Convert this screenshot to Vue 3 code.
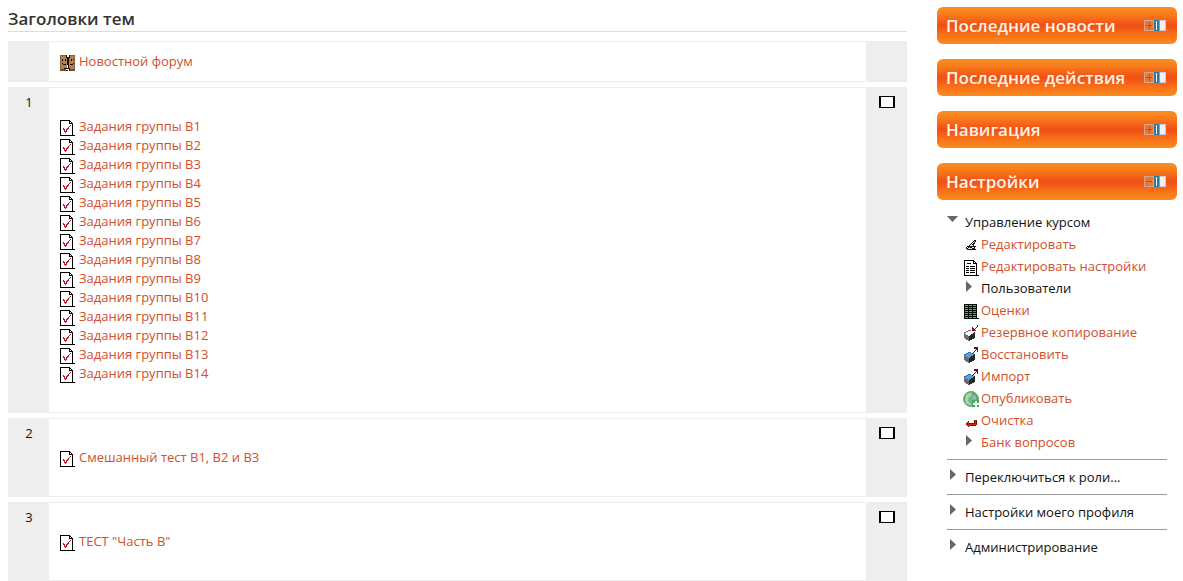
<script setup>
import { ref } from 'vue'

const tasks = Array.from({ length: 14 }, (_, i) => `Задания группы B${i + 1}`)

const sections = [
  { number: '', items: ['Новостной форум'], icon: 'forum' },
  { number: '1', items: tasks, icon: 'quiz' },
  { number: '2', items: ['Смешанный тест B1, B2 и B3'], icon: 'quiz' },
  { number: '3', items: ['ТЕСТ "Часть B"'], icon: 'quiz' }
]

const blocks = ref([
  { title: 'Последние новости', open: false },
  { title: 'Последние действия', open: false },
  { title: 'Навигация', open: false },
  { title: 'Настройки', open: true }
])

const courseItems = [
  { text: 'Редактировать', icon: 'edit' },
  { text: 'Редактировать настройки', icon: 'settings' },
  { text: 'Пользователи', icon: 'branch', plain: true },
  { text: 'Оценки', icon: 'grades' },
  { text: 'Резервное копирование', icon: 'backup' },
  { text: 'Восстановить', icon: 'restore' },
  { text: 'Импорт', icon: 'restore' },
  { text: 'Опубликовать', icon: 'publish' },
  { text: 'Очистка', icon: 'reset' },
  { text: 'Банк вопросов', icon: 'branch' }
]

const branches = ['Переключиться к роли...', 'Настройки моего профиля', 'Администрирование']
</script>

<template>
  <div class="page">
    <main class="content">
      <h2 class="title">Заголовки тем</h2>
      <ul class="sections">
        <li v-for="(section, i) in sections" :key="i" class="section" :class="{ topic: section.number }">
          <div class="side">{{ section.number }}</div>
          <ul class="activities">
            <li v-for="item in section.items" :key="item">
              <a href="#" class="activity">
                <svg v-if="section.icon === 'quiz'" class="icon" width="16" height="16" viewBox="0 0 16 16" shape-rendering="crispEdges" aria-hidden="true">
                  <path d="M0 0h10v1h1v1h1v1h1v12h2v1H0z" fill="#000" />
                  <path d="M1 1h8v3h3v11H1z" fill="#fff" />
                  <path d="M10 2h1v1h-1z" fill="#fff" />
                  <path d="M3 8h1v1h1v2h1V9h1V8h1V7h1V6h1V5h1v1h-1v1H9v2H8v1H7v2H6v1H5v-1H4v-2H3z" fill="#b3182c" />
                </svg>
                <svg v-else class="icon" width="16" height="16" viewBox="0 0 16 16" shape-rendering="crispEdges" aria-hidden="true">
                  <path d="M0 0h7v14H0z M9 0h6v14H9z" fill="#b08052" />
                  <path d="M0 0h7v1H0z M9 0h6v1H9z M0 1h1v13H0z M14 1h1v13h-1z" fill="#8d6340" />
                  <path d="M6 0h1v3H6z M9 0h1v3H9z M7 2h1v8H7z M8 2h1v12H8z M4 13h4v1H4z M2 4h1v2H2z M5 4h1v2H5z M11 4h1v2h-1z M13 4h1v1h-1z M2 8h1v1H2z M3 9h3v1H3z M10 9h3v1h-3z M13 8h1v1h-1z M6 15h2v1H6z M9 13h1v3H9z" fill="#17100c" />
                  <path d="M0 14h6v2H0z M10 14h5v2h-5z" fill="#6f5138" />
                  <path d="M7 0h2v2H7z M7 11h1v2H7z" fill="#fff" />
                </svg>
                <span>{{ item }}</span>
              </a>
            </li>
          </ul>
          <div class="side">
            <button v-if="section.number" type="button" class="only" :aria-label="`Показать только тему ${section.number}`"></button>
          </div>
        </li>
      </ul>
    </main>

    <aside class="sidebar">
      <section v-for="block in blocks" :key="block.title" class="block">
        <header class="block-head">
          <h2>{{ block.title }}</h2>
          <button type="button" class="toggle" :aria-label="block.title" :aria-expanded="block.open" @click="block.open = !block.open">
            <svg width="22" height="12" viewBox="0 0 22 12" shape-rendering="crispEdges" aria-hidden="true">
              <path d="M.5.5h9v10h-9z" fill="#e87838" stroke="#d6a582" />
              <path d="M2 5h6v1H2z" fill="#a8532f" />
              <path v-if="!block.open" d="M5 2h1v7H5z" fill="#a8532f" />
              <path d="M10 0h5v11h-5z" fill="#2d789c" />
              <path d="M12 1h1v9h-1z" fill="#fff" />
              <path d="M15 0h1v11h-1z" fill="#dc8a57" />
              <path d="M16 0h6v11h-6z" fill="#d5c9cb" />
              <path d="M16 1h5v9h-5z" fill="#f2efee" />
            </svg>
          </button>
        </header>

        <ul v-if="block.open && block.title === 'Настройки'" class="tree">
          <li class="root">
            <button type="button" class="branch open" aria-expanded="true">
              <svg class="mark" width="12" height="12" viewBox="0 0 12 12" aria-hidden="true"><path d="M0 2h11L5.500 8z" fill="#666" /></svg>
              <span>Управление курсом</span>
            </button>
            <ul class="leaves">
              <li v-for="item in courseItems" :key="item.text">
                <a href="#" class="leaf" :class="{ plain: item.plain }">
                  <svg class="icon" width="18" height="18" viewBox="0 0 18 18" aria-hidden="true">
                    <path v-if="item.icon === 'branch'" d="M3 1v11l6-5.500z" fill="#666" />

                    <g v-else-if="item.icon === 'edit'" shape-rendering="crispEdges">
                      <path d="M11 4h2v2h-1v2h-1v2h2v1h-1v2h1v1H4v-1H3v-2h1v-1h2V9h1V8h1V7h1V6h1V5h1z" fill="#1c1712" />
                      <path d="M10 6h1v1h-1z M9 7h1v1H9z M8 8h1v1H8z M7 9h3v1H7z M9 11h2v1H9z M5 12h4v1H5z M4 11h1v1H4z" fill="#efe6d2" />
                      <path d="M11 5h1v1h-1z M6 11h1v1H6z" fill="#a88d59" />
                    </g>

                    <g v-else-if="item.icon === 'settings'" shape-rendering="crispEdges">
                      <path d="M1 2h10v1h1v1h1v1h1v12h2v1H1z" fill="#000" />
                      <path d="M2 3h8v3h3v11H2z M11 4h1v1h-1z" fill="#fff" />
                      <path d="M4 5h4v1H4z M3 8h3v1H3z M7 8h5v1H7z M3 10h3v1H3z M7 10h5v1H7z M3 12h3v1H3z M7 12h5v1H7z M3 14h3v1H3z M7 14h5v1H7z" fill="#000" />
                    </g>

                    <g v-else-if="item.icon === 'grades'" shape-rendering="crispEdges">
                      <path d="M1 2h13v14h2v1H1z" fill="#071006" />
                      <path d="M2 3h3v1H2z M6 3h3v1H6z M10 3h3v1h-3z M2 5h3v1H2z M6 5h3v1H6z M10 5h3v1h-3z M2 7h3v1H2z M6 7h3v1H6z M10 7h3v1h-3z M2 9h3v1H2z M6 9h3v1H6z M10 9h3v1h-3z M2 11h3v1H2z M6 11h3v1H6z M10 11h3v1h-3z M2 13h3v1H2z M6 13h3v1H6z M10 13h3v1h-3z M2 15h3v1H2z M6 15h3v1H6z M10 15h3v1h-3z" fill="#4fb860" />
                      <path d="M6 5h3v1H6z M10 9h3v1h-3z" fill="#9c6846" />
                    </g>

                    <g v-else-if="item.icon === 'backup' || item.icon === 'restore'" shape-rendering="crispEdges">
                      <path d="M1 9l5 2v6l-5-3z" fill="#6c6c6c" />
                      <path d="M6 11l6-3v6l-6 3z" fill="#24282b" />
                      <path d="M1 9l5-3 6 2-6 4z" :fill="item.icon === 'backup' ? '#f4f4f4' : '#5b9ee0'" />
                      <path d="M1 8h2V7h2V6h3v1H5v1H3v1H1z" :fill="item.icon === 'backup' ? '#777' : '#3f6f9d'" />
                      <path v-if="item.icon === 'backup'" d="M14 1h1v2h-1v1h-1v1h-1v1h1v1H9V3h1v1h1v1h1V4h1V3h1V2h0z" fill="#7c101c" />
                      <path v-else d="M11 1h4v5h-1V4h-1v1h-1v1h-1v1h-1v1H9V7h1V6h1V5h1V4h1V3h-2z" fill="#651020" />
                    </g>

                    <g v-else-if="item.icon === 'publish'">
                      <circle cx="8" cy="9" r="7.500" fill="#63a76d" stroke="#6aa877" />
                      <circle cx="8" cy="9" r="5" fill="#69aeca" />
                      <path d="M3 5c3-3 6-2 6-2L8 6 6 7 5 11l4 4c-4 1-7-2-7-6z" fill="#a9d897" />
                      <path d="M10 5l3 1v4l-3-1-1-2z" fill="#8bc588" />
                      <path d="M9 10h7v7H9z" fill="#51a55b" />
                      <path d="M12 11h2v2h2v2h-2v2h-2v-2h-2v-2h2z" fill="#efffe8" />
                    </g>

                    <g v-else shape-rendering="crispEdges">
                      <path d="M2 12l4-4v3h5V8h3v4l-2 2H6v2z" fill="#7a0c0c" />
                      <path d="M3 12l3-3v3h6V8h1v4l-1 1H6v2z" fill="#d9200e" />
                    </g>
                  </svg>
                  <span>{{ item.text }}</span>
                </a>
              </li>
            </ul>
          </li>
          <li v-for="name in branches" :key="name" class="root ruled">
            <button type="button" class="branch" aria-expanded="false">
              <svg class="mark" width="12" height="12" viewBox="0 0 12 12" aria-hidden="true"><path d="M3 0v11l6-5.500z" fill="#666" /></svg>
              <span>{{ name }}</span>
            </button>
          </li>
        </ul>
      </section>
    </aside>
  </div>
</template>

<style>
body {
  margin: 0;
  background: #fff;
}
</style>

<style scoped>
.page {
  display: flex;
  gap: 30px;
  padding: 0 6px 0 8px;
  font-family: "Trebuchet MS", "Open Sans", "Noto Sans", sans-serif;
  font-size: 13px;
  color: #111;
}

ul {
  list-style: none;
  margin: 0;
  padding: 0;
}

button {
  padding: 0;
  border: 0;
  background: none;
  font: inherit;
  color: inherit;
  cursor: pointer;
}

a {
  color: #d0502e;
  text-decoration: none;
}

a:hover {
  text-decoration: underline;
}

.content {
  flex: 1;
  min-width: 0;
}

.title {
  margin: 0 0 9px;
  padding: 7px 0 0;
  border-bottom: 1px solid #ddd;
  font-size: 17px;
  font-weight: 600;
  line-height: 24px;
  color: #333;
}

.sections {
  display: flex;
  flex-direction: column;
  gap: 5px;
}

.section {
  display: flex;
  border-top: 1px solid #eee;
  border-bottom: 1px solid #eee;
}

.side {
  display: flex;
  flex: 0 0 41px;
  align-items: flex-start;
  justify-content: center;
  box-sizing: border-box;
  padding: 5px 0 0 1px;
  background: #eee;
  line-height: 19px;
}

.activities {
  flex: 1;
  padding: 10px 11px;
}

.topic .activities {
  padding: 29px 11px;
}

.activity {
  display: inline-flex;
  gap: 3px;
  height: 19px;
  line-height: 19px;
  vertical-align: top;
}

.activity .icon {
  flex: none;
  margin-top: 3px;
}

.only {
  width: 16px;
  height: 12px;
  margin: 3px 1px 0 0;
  border: solid #000;
  border-width: 1px 2px;
  background: #fff;
}

.sidebar {
  display: flex;
  flex: 0 0 240px;
  flex-direction: column;
  gap: 15px;
  padding-top: 7px;
}

.block-head {
  display: flex;
  align-items: center;
  justify-content: space-between;
  height: 37px;
  padding: 0 11px 0 9px;
  border-radius: 6px;
  background: linear-gradient(#f98f20, #f97c1c 20%, #f04e16 50%, #f97018 75%, #fa8b1e);
}

.block-head h2 {
  margin: 0;
  font-size: 17px;
  font-weight: 600;
  line-height: 24px;
  color: #fff4e4;
}

.toggle {
  height: 14px;
  line-height: 0;
}

.tree {
  padding: 11px 10px 0;
}

.branch {
  display: flex;
  gap: 6px;
  line-height: 22px;
}

.mark {
  flex: none;
  margin-top: 3px;
}

.leaves {
  padding: 0 0 6px 16px;
}

.leaf {
  display: flex;
  height: 22px;
  line-height: 22px;
}

.leaf .icon {
  flex: none;
  margin-top: 3px;
}

.plain {
  color: #111;
}

.ruled {
  padding: 6px 0;
  border-top: 1px solid #999;
}
</style>
